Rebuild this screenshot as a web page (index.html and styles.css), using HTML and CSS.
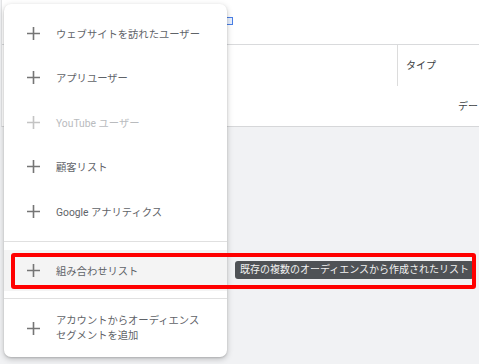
FILE: index.html
```html
<!DOCTYPE html>
<html lang="ja">
<head>
    <meta charset="UTF-8">
    <title>オーディエンス</title>
    <link rel="stylesheet" href="styles.css">
</head>
<body>
    <div class="panel">
        <div class="panel-top">
            <span class="blue-mark"></span>
        </div>
        <div class="table-head">
            <div class="col-name"></div>
            <div class="col-type">タイプ</div>
        </div>
        <div class="table-row">
            <div class="cell-type">デー</div>
        </div>
    </div>

    <div class="menu">
        <div class="menu-section first">
            <div class="menu-item">
                <svg class="plus" viewBox="0 0 13 13"><path d="M6.5 0v13M0 6.5h13"/></svg>
                <span>ウェブサイトを訪れたユーザー</span>
            </div>
            <div class="menu-item">
                <svg class="plus" viewBox="0 0 13 13"><path d="M6.5 0v13M0 6.5h13"/></svg>
                <span>アプリユーザー</span>
            </div>
            <div class="menu-item disabled">
                <svg class="plus" viewBox="0 0 13 13"><path d="M6.5 0v13M0 6.5h13"/></svg>
                <span>YouTube ユーザー</span>
            </div>
            <div class="menu-item">
                <svg class="plus" viewBox="0 0 13 13"><path d="M6.5 0v13M0 6.5h13"/></svg>
                <span>顧客リスト</span>
            </div>
            <div class="menu-item">
                <svg class="plus" viewBox="0 0 13 13"><path d="M6.5 0v13M0 6.5h13"/></svg>
                <span>Google アナリティクス</span>
            </div>
        </div>
        <div class="menu-section middle">
            <div class="menu-item hovered">
                <svg class="plus" viewBox="0 0 13 13"><path d="M6.5 0v13M0 6.5h13"/></svg>
                <span>組み合わせリスト</span>
            </div>
        </div>
        <div class="menu-section">
            <div class="menu-item tall">
                <svg class="plus" viewBox="0 0 13 13"><path d="M6.5 0v13M0 6.5h13"/></svg>
                <span>アカウントからオーディエンス<br>セグメントを追加</span>
            </div>
        </div>
    </div>

    <div class="tooltip">既存の複数のオーディエンスから作成されたリスト</div>
    <div class="highlight"></div>
</body>
</html>
```

FILE: styles.css
```css
body {
    margin: 0;
    background: #f1f2f4;
    font-family: Roboto, "Noto Sans CJK JP", sans-serif;
    overflow: hidden;
    position: relative;
    height: 364px;
}

/* page behind the menu */
.panel {
    margin-left: 1px;
    border-left: 1px solid #e2e3e5;
    background: #fff;
    border-bottom: 1px solid #d6d7d9;
}

.panel-top {
    height: 44px;
    border-bottom: 1px solid #d9dadc;
    position: relative;
}

.blue-mark {
    position: absolute;
    left: 221px;
    top: 17px;
    width: 8px;
    height: 6px;
    border: 1.5px solid #4a7fe6;
    background: #e8f0fe;
}

.table-head {
    display: flex;
    height: 41px;
    font-size: 10px;
    color: #3c4043;
}

.col-name {
    width: 395px;
    border-right: 1px solid #dcdcdc;
}

.col-type {
    padding-left: 8px;
    padding-top: 12px;
}

.table-row {
    height: 40px;
    display: flex;
    font-size: 10px;
    color: #3c4043;
}

.cell-type {
    margin-left: 456px;
    padding-top: 12px;
    white-space: nowrap;
}

/* popup menu */
.menu {
    position: absolute;
    left: 4px;
    top: 4px;
    width: 223px;
    background: #fff;
    border-radius: 7px;
    box-shadow: 0 2px 6px rgba(0, 0, 0, 0.22), 0 1px 2px rgba(0, 0, 0, 0.14);
}

.menu-section {
    padding: 8px 0;
    border-top: 1px solid #e0e0e0;
}

.menu-section.first {
    padding: 7px 0 7.5px;
    border-top: none;
}

.menu-section.middle {
    padding: 8px 0 7px;
}

.menu-item {
    display: flex;
    align-items: center;
    gap: 16px;
    height: 44.5px;
    padding-left: 23px;
    font-size: 10.3px;
    color: #5f6368;
}

.menu-item.hovered {
    height: 41px;
    background: #f4f4f4;
}

.menu-item.tall {
    height: auto;
    padding-top: 6px;
    padding-bottom: 6px;
    line-height: 15px;
}

.menu-item.disabled {
    color: #b9bbbe;
}

.plus {
    width: 13px;
    height: 13px;
    flex-shrink: 0;
    stroke: #757575;
    stroke-width: 1.6;
    fill: none;
}

.menu-item.disabled .plus {
    stroke: #c4c4c4;
}

/* tooltip and annotation box */
.tooltip {
    position: absolute;
    left: 235px;
    top: 261px;
    height: 18px;
    line-height: 18px;
    padding: 0 5px;
    background: #4f5256;
    color: #f1f1f1;
    font-size: 10px;
    border-radius: 3px;
    white-space: nowrap;
}

.highlight {
    position: absolute;
    left: 11px;
    top: 253px;
    width: 457px;
    height: 28px;
    border: 4px solid #f00;
    border-radius: 3px;
}
```
